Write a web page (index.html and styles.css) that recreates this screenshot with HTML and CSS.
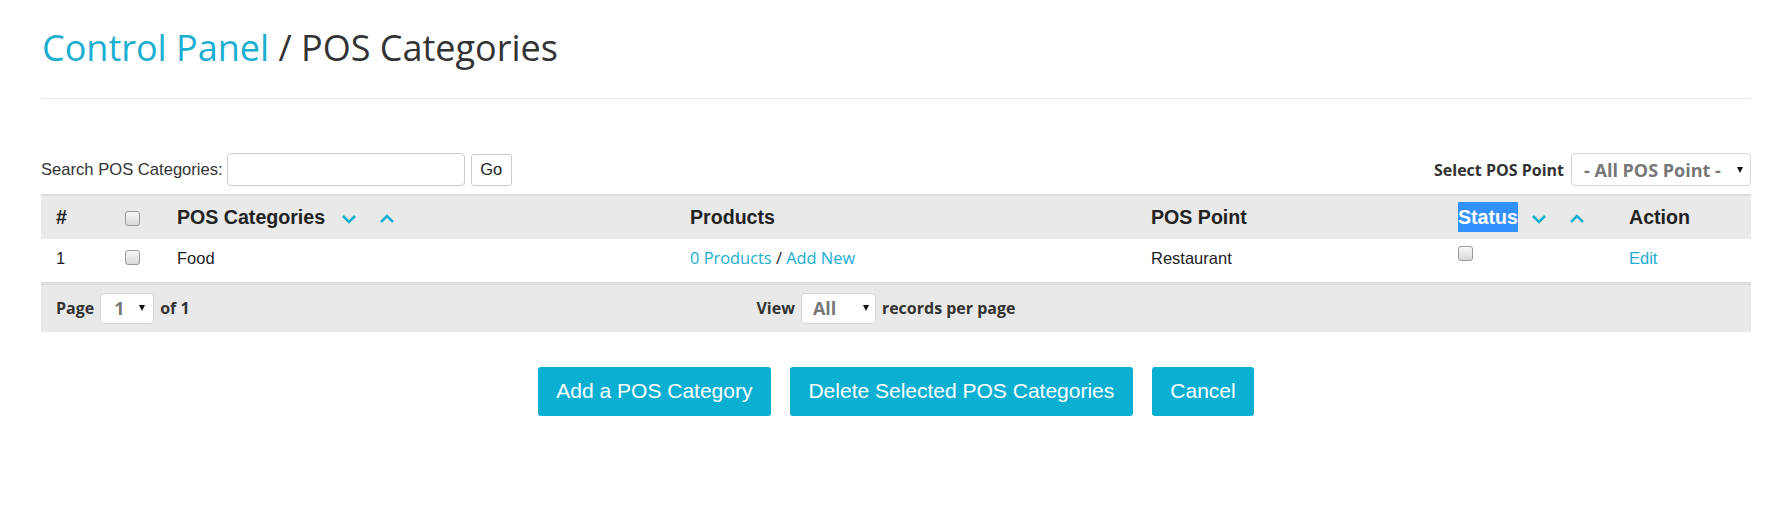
FILE: index.html
```html
<!DOCTYPE html>
<html lang="en">
<head>
<meta charset="utf-8">
<title>POS Categories</title>
<link rel="stylesheet" href="styles.css">
</head>
<body>
<div class="page">
  <h1 class="title"><a class="crumb" href="#">Control Panel</a> / POS Categories</h1>
  <div class="rule"></div>

  <div class="toolbar">
    <div class="search">
      <span class="search-label">Search POS Categories:</span>
      <span class="search-input"></span>
      <span class="go">Go</span>
    </div>
    <div class="filter">
      <span class="filter-label">Select POS Point</span>
      <span class="select select-wide"><span class="select-text">- All POS Point -</span><span class="caret"></span></span>
    </div>
  </div>

  <table class="grid">
    <colgroup>
      <col class="c-num"><col class="c-check"><col class="c-name"><col class="c-products"><col class="c-point"><col class="c-status"><col class="c-action">
    </colgroup>
    <thead>
      <tr>
        <th>#</th>
        <th><span class="cb"></span></th>
        <th>POS Categories<span class="sort sort-first"><svg width="16" height="10" viewBox="0 0 16 10"><polyline points="2,2 8,8 14,2"/></svg></span><span class="sort sort-second"><svg width="16" height="10" viewBox="0 0 16 10"><polyline points="2,8 8,2 14,8"/></svg></span></th>
        <th>Products</th>
        <th>POS Point</th>
        <th><span class="selected">Status</span><span class="sort sort-status"><svg width="16" height="10" viewBox="0 0 16 10"><polyline points="2,2 8,8 14,2"/></svg></span><span class="sort sort-second"><svg width="16" height="10" viewBox="0 0 16 10"><polyline points="2,8 8,2 14,8"/></svg></span></th>
        <th>Action</th>
      </tr>
    </thead>
    <tbody>
      <tr>
        <td>1</td>
        <td><span class="cb cb-row"></span></td>
        <td>Food</td>
        <td class="os"><a href="#">0 Products</a> / <a href="#">Add New</a></td>
        <td>Restaurant</td>
        <td><span class="cb cb-status"></span></td>
        <td><a href="#">Edit</a></td>
      </tr>
    </tbody>
    <tfoot>
      <tr>
        <td colspan="7">
          <div class="pager">
            <div class="pager-left">
              <span>Page</span>
              <span class="select select-page"><span class="select-text">1</span><span class="caret"></span></span>
              <span>of 1</span>
            </div>
            <div class="pager-mid">
              <span>View</span>
              <span class="select select-view"><span class="select-text">All</span><span class="caret"></span></span>
              <span>records per page</span>
            </div>
            <div class="pager-right"></div>
          </div>
        </td>
      </tr>
    </tfoot>
  </table>

  <div class="actions">
    <span class="btn">Add a POS Category</span>
    <span class="btn">Delete Selected POS Categories</span>
    <span class="btn">Cancel</span>
  </div>
</div>
</body>
</html>
```

FILE: styles.css
```css
* { box-sizing: border-box; }
html, body { margin: 0; padding: 0; background: #fff; }
body {
  font-family: "Liberation Sans", Arial, sans-serif;
  font-size: 16.5px;
  color: #333;
}
a { color: #1aaed1; text-decoration: none; }

.page { padding: 0 34px 0 41px; }

.title {
  margin: 0;
  padding-top: 28px;
  font-family: "Open Sans", sans-serif;
  font-weight: 400;
  font-size: 36px;
  line-height: 40px;
  color: #333;
  padding-left: 1px;
}
.crumb { color: #1aaed1; }

.rule {
  margin-top: 30px;
  border-top: 1px solid #e8e8e8;
}

.toolbar {
  margin-top: 54px;
  display: flex;
  justify-content: space-between;
  align-items: center;
  height: 33px;
}
.search { display: flex; align-items: center; }
.search-label { padding-left: 0; font-size: 16.6px; }
.search-input {
  margin-left: 4px;
  width: 238px;
  height: 33px;
  border: 1px solid #ccc;
  border-radius: 4px;
  background: #fff;
}
.go {
  margin-left: 6px;
  width: 41px;
  height: 32px;
  border: 1px solid #ccc;
  border-radius: 3px;
  background: #fff;
  display: flex;
  align-items: center;
  justify-content: center;
  color: #222;
}

.filter { display: flex; align-items: center; }
.filter-label {
  font-family: "Open Sans", sans-serif;
  font-weight: 700;
  font-size: 16px;
  color: #333;
  margin-right: 7px;
}

.select {
  display: flex;
  align-items: center;
  justify-content: space-between;
  background: #fff;
  border: 1px solid #d6d6d6;
  border-radius: 4px;
  font-family: "Open Sans", sans-serif;
  font-weight: 700;
  color: #777;
}
.caret {
  width: 0; height: 0;
  border-left: 3px solid transparent;
  border-right: 3px solid transparent;
  border-top: 6px solid #111;
}
.select-wide { width: 180px; height: 33px; padding: 0 7px 0 12px; font-size: 18px; }
.select-page { width: 54px; height: 31px; padding: 0 8px 0 13px; font-size: 18px; }
.select-view { width: 75px; height: 31px; padding: 0 6px 0 11px; font-size: 18px; }

.grid {
  margin-top: 8px;
  width: 100%;
  border-collapse: collapse;
  table-layout: fixed;
}
.c-num { width: 69px; }
.c-check { width: 52px; }
.c-name { width: 513px; }
.c-products { width: 461px; }
.c-point { width: 307px; }
.c-status { width: 171px; }
.c-action { width: 137px; }

.grid thead tr {
  background: #e9e9e9;
  border-top: 2px solid #dcdcdc;
}
.grid th {
  height: 44px;
  padding: 0 15px;
  text-align: left;
  font-size: 19.6px;
  font-weight: 700;
  color: #222;
  vertical-align: middle;
  white-space: nowrap;
}
.grid td {
  padding: 0 15px;
  vertical-align: top;
}
.grid tbody td {
  height: 44px;
  padding-top: 7px;
  line-height: 24px;
  color: #222;
}
.os { font-family: "Open Sans", sans-serif; font-size: 16.4px; }

.selected { background: #3390ff; color: #fff; padding: 4px 0; }

.sort { display: inline-block; vertical-align: middle; line-height: 0; }
.sort svg { display: block; }
.sort polyline { fill: none; stroke: #1aaed1; stroke-width: 2.5; }
.sort-first { margin-left: 16px; }
.sort-status { margin-left: 13px; }
.sort-second { margin-left: 22px; }

.cb {
  display: inline-block;
  width: 15px;
  height: 15px;
  border: 1px solid #9a9a9a;
  border-radius: 3px;
  background: linear-gradient(#f8f8f8, #d8d8d8);
  vertical-align: middle;
}
.cb-row { margin-top: 4px; vertical-align: top; }
.cb-status { margin-top: 0; vertical-align: top; }

.grid tfoot tr {
  background: #e9e9e9;
  border-top: 3px solid #dcdcdc;
}
.grid tfoot td { padding: 0 15px; }
.pager {
  height: 47px;
  display: grid;
  grid-template-columns: 1fr auto 1fr;
  align-items: center;
  font-family: "Open Sans", sans-serif;
  font-weight: 700;
  font-size: 16px;
  color: #333;
}
.pager-left, .pager-mid { display: flex; align-items: center; gap: 6px; }
.pager-mid { margin-right: 20px; }

.actions {
  margin-top: 35px;
  display: flex;
  justify-content: center;
  gap: 19px;
}
.btn {
  height: 49px;
  padding: 0 18.5px;
  background: #0aafd2;
  color: #fff;
  border-radius: 3px;
  font-size: 21px;
  display: flex;
  align-items: center;
}
```
